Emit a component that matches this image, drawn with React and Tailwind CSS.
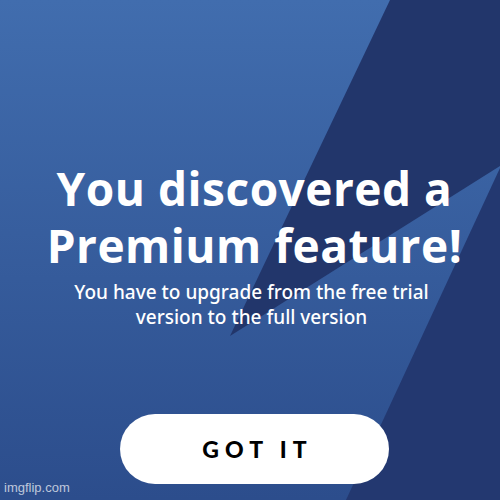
export default function App() {
  return (
    <div className="relative w-[500px] h-[500px] overflow-hidden bg-gradient-to-b from-[#416dae] to-[#2c4d8c]">
      {/* angled backdrop shapes */}
      <svg
        className="absolute inset-0"
        width="500"
        height="500"
        viewBox="0 0 500 500"
      >
        <polygon points="390,0 500,0 500,166 230,336" fill="#22366b" />
        <polygon points="500,168 346,500 500,500" fill="#233870" />
      </svg>

      <div className="relative flex flex-col items-center pl-[9px] pt-[160px] text-white">
        <h1 className="text-center text-[46px] leading-[57px] font-bold tracking-[0.5px] font-['Open_Sans',sans-serif]">
          You discovered a
          <br />
          Premium feature!
        </h1>
        <p className="mt-[6px] pr-[6px] text-center text-[19px] leading-[25px] font-medium font-['Noto_Sans',sans-serif]">
          You have to upgrade from the free trial
          <br />
          version to the full version
        </p>

        <button className="mt-[84px] w-[269px] h-[70px] rounded-full bg-white text-black text-[23px] font-black tracking-[6px] pl-[6px] font-['Lato',sans-serif]">
          GOT IT
        </button>
      </div>

      <span className="absolute left-[4px] bottom-[3px] text-[13px] text-white/70 font-['Liberation_Sans',sans-serif]">
        imgflip.com
      </span>
    </div>
  );
}
